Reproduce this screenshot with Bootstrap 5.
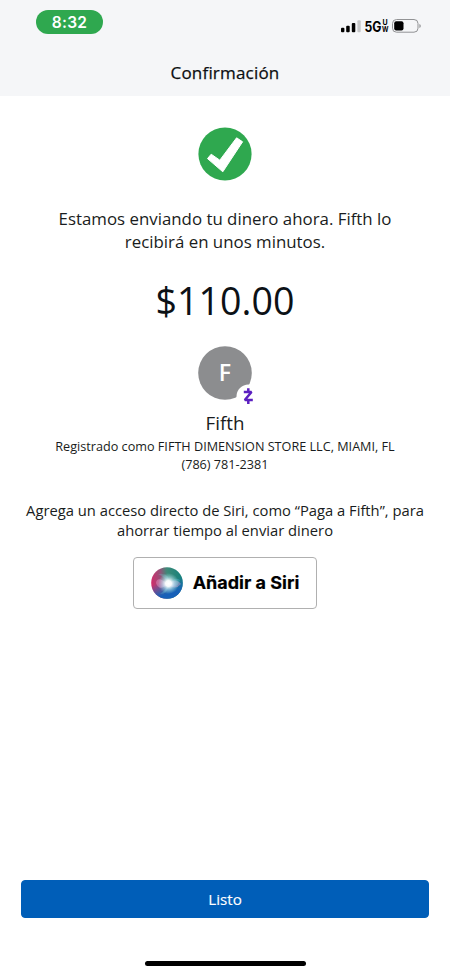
<!DOCTYPE html>
<html lang="es">
<head>
<meta charset="utf-8">
<meta name="viewport" content="width=device-width, initial-scale=1">
<title>Confirmación</title>
<link href="https://cdn.jsdelivr.net/npm/bootstrap@5.3.0/dist/css/bootstrap.min.css" rel="stylesheet">
<style>
body { font-family: "Open Sans", sans-serif; color: #191c20; background: #fff; }
.screen { height: 975px; }
.top-area { height: 96px; background: #f5f6f8; }
.status-row { height: 44px; padding: 10px 29px 0 36px; }
.clock { width: 67px; height: 24px; background: #2fa84f; font: 600 15.5px/25px Inter, sans-serif; letter-spacing: .3px; }
.signals { margin-top: 8px; }
.page-title { font-size: 17px; line-height: 24px; font-weight: 400; letter-spacing: .2px; -webkit-text-stroke: .25px #0c0e10; color: #0c0e10; margin-top: 17px; }
.check-icon { margin-top: 31px; }
.message { font-size: 16.85px; line-height: 23px; margin-top: 26px; }
.amount { font-size: 37.6px; line-height: 52px; margin-top: 22px; color: #0c1116; }
.avatar { width: 54px; height: 54px; margin-top: 19px; }
.payee { font-size: 18.8px; line-height: 26px; margin-top: 10px; }
.details { font-size: 12.65px; line-height: 18px; margin-top: 1px; }
.siri-text { font-size: 14.75px; line-height: 20px; margin-top: 27px; }
.siri-btn { width: 184px; height: 52px; margin-top: 17px; border: 1px solid #b0b0b0; border-radius: 4px; gap: 10px; font: 700 18px/24px Inter, sans-serif; color: #000; -webkit-text-stroke: .2px #000; }
.done-btn { --bs-btn-bg: #005eb8; --bs-btn-border-color: #005eb8; --bs-btn-color: #fff; height: 38px; margin: 0 21px; border-radius: 4px; font-size: 15.2px; -webkit-text-stroke: .15px #fff; line-height: 22px; }
.home-bar { width: 161px; height: 5px; margin: 43px auto 9px; background: #000; }
</style>
</head>
<body>
<div class="screen d-flex flex-column text-center">
  <header class="top-area">
    <div class="status-row d-flex justify-content-between align-items-start">
      <div class="clock rounded-pill text-white">8:32</div>
      <svg class="signals" width="82" height="18" viewBox="0 0 82 18" aria-hidden="true">
        <rect x="2" y="9.7" width="3.4" height="4.6" rx="1"/>
        <rect x="7.2" y="7.8" width="3.5" height="6.5" rx="1"/>
        <rect x="12.8" y="5" width="3.5" height="9.3" rx="1"/>
        <rect x="18.4" y="2.2" width="3.3" height="12.1" rx="1" fill="#c5c6c8"/>
        <text x="25.5" y="14" font-family="Inter, sans-serif" font-weight="700" font-size="14" textLength="17" lengthAdjust="spacingAndGlyphs">5G</text>
        <text x="43.6" y="7.4" font-family="Inter, sans-serif" font-weight="700" font-size="7">U</text>
        <text x="43" y="14.3" font-family="Inter, sans-serif" font-weight="700" font-size="7" textLength="6.5" lengthAdjust="spacingAndGlyphs">W</text>
        <rect x="53.5" y="1.5" width="25.5" height="12.7" rx="4" fill="none" stroke="#929395"/>
        <rect x="55.2" y="3.2" width="9.3" height="9.3" rx="2"/>
        <path d="M80.4 6v4q1.4-.7 1.4-2T80.4 6" fill="#929395"/>
      </svg>
    </div>
    <h1 class="page-title mb-0">Confirmación</h1>
  </header>
  <main class="flex-grow-1 d-flex flex-column align-items-center">
    <svg class="check-icon flex-shrink-0" width="54" height="54" viewBox="0 0 54 54" aria-hidden="true">
      <circle cx="27" cy="27" r="26.6" fill="#2fa84f"/>
      <path d="M9.5 31.6 13.2 27.2 21.8 33.2 38.6 10.8 44.6 14.8 24.8 44.8Z" fill="#fff" stroke="#fff" stroke-linejoin="round"/>
    </svg>
    <p class="message mb-0">Estamos enviando tu dinero ahora. Fifth lo<br>recibirá en unos minutos.</p>
    <div class="amount">$110.00</div>
    <svg class="avatar flex-shrink-0 overflow-visible" viewBox="0 0 54 54" role="img" aria-label="Fifth">
      <circle cx="27" cy="27" r="26.8" fill="#8c8d8f"/>
      <text x="27" y="35" text-anchor="middle" font-family="Open Sans, sans-serif" font-weight="600" font-size="23" fill="#fff">F</text>
      <circle cx="50.5" cy="50.5" r="12" fill="#fff"/>
      <path d="M45.8 46H53.5L46.8 54H54.8M50.3 42.3V46M50.3 54V58" fill="none" stroke="#5b1fc0" stroke-width="2.5" stroke-linejoin="bevel"/>
    </svg>
    <h2 class="payee fw-normal mb-0">Fifth</h2>
    <p class="details mb-0">Registrado como FIFTH DIMENSION STORE LLC, MIAMI, FL<br>(786) 781-2381</p>
    <p class="siri-text mb-0">Agrega un acceso directo de Siri, como “Paga a Fifth”, para<br>ahorrar tiempo al enviar dinero</p>
    <button type="button" class="siri-btn bg-white d-flex align-items-center justify-content-center p-0">
      <svg class="flex-shrink-0" width="32" height="32" viewBox="0 0 32 32" aria-hidden="true">
        <defs>
          <linearGradient id="orb" x1="0" y1=".4" x2="1" y2=".3">
            <stop offset="0" stop-color="#d02d6b"/><stop offset=".3" stop-color="#965078"/><stop offset=".52" stop-color="#3d8a78"/><stop offset="1" stop-color="#14807b"/>
          </linearGradient>
          <linearGradient id="depth" x1=".3" y1="0" x2=".6" y2="1">
            <stop offset=".45" stop-color="#1768c0" stop-opacity="0"/><stop offset=".85" stop-color="#1760b8"/>
          </linearGradient>
          <radialGradient id="glow">
            <stop offset="0" stop-color="#fff"/><stop offset=".28" stop-color="#fff" stop-opacity=".95"/><stop offset=".6" stop-color="#cdeeff" stop-opacity=".5"/><stop offset="1" stop-color="#a8e8f2" stop-opacity="0"/>
          </radialGradient>
        </defs>
        <circle cx="16" cy="16" r="15.8" fill="url(#orb)"/>
        <circle cx="16" cy="16" r="15.8" fill="url(#depth)"/>
        <path d="M5 16Q6 8 17 17Q24 24 30 17Q25 10 17 17Q8 25 5 16" fill="#f4a8d8" opacity=".4"/>
        <path d="M7 7Q19 5 18 17Q24 9 29 13Q26 23 18 17Q17 27 9 27Q16 22 17 17Q13 9 7 7" fill="#70dce0" opacity=".25"/>
        <circle cx="17.5" cy="16.5" r="10.5" fill="url(#glow)"/>
      </svg>
      <span>Añadir a Siri</span>
    </button>
  </main>
  <footer class="d-flex flex-column">
    <button type="button" class="done-btn btn py-0">Listo</button>
    <div class="home-bar rounded-pill"></div>
  </footer>
</div>
<script src="https://cdn.jsdelivr.net/npm/bootstrap@5.3.0/dist/js/bootstrap.bundle.min.js"></script>
</body>
</html>
